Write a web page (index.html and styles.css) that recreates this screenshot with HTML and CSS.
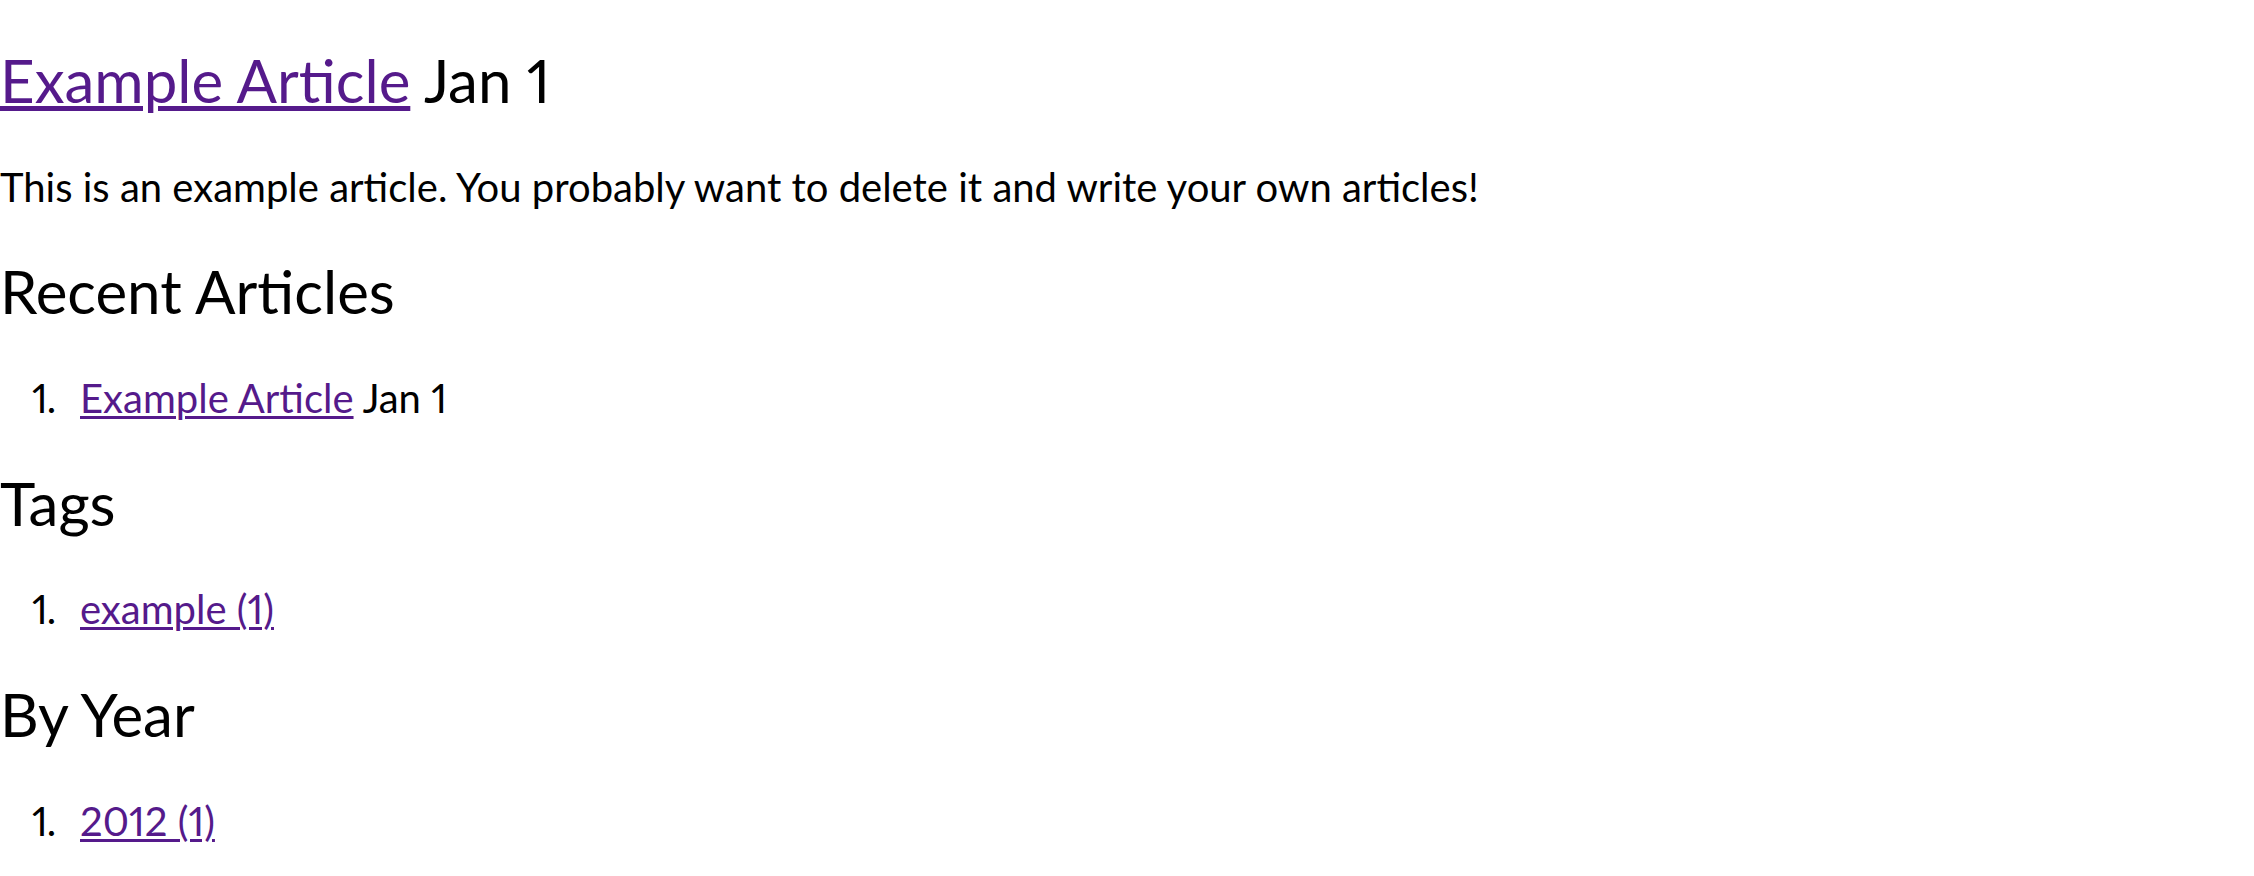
FILE: index.html
```html
<!DOCTYPE html>
<html lang="en">
<head>
<meta charset="utf-8">
<title>Example Article</title>
<link rel="stylesheet" href="styles.css">
</head>
<body>
<div class="page">
  <article class="article">
    <h1 class="title"><a class="link" href="#">Example Article</a> Jan 1</h1>
    <p class="text">This is an example article. You probably want to delete it and write your own articles!</p>
  </article>
  <section class="block">
    <h2 class="heading">Recent Articles</h2>
    <ol class="list">
      <li class="item"><a class="link" href="#">Example Article</a> Jan 1</li>
    </ol>
  </section>
  <section class="block">
    <h2 class="heading">Tags</h2>
    <ol class="list">
      <li class="item"><a class="link" href="#">example (1)</a></li>
    </ol>
  </section>
  <section class="block">
    <h2 class="heading">By Year</h2>
    <ol class="list">
      <li class="item"><a class="link" href="#">2012 (1)</a></li>
    </ol>
  </section>
</div>
</body>
</html>
```

FILE: styles.css
```css
html, body {
  margin: 0;
  padding: 0;
  background: #ffffff;
}

body {
  font-family: "Lato", "Open Sans", sans-serif;
  font-size: 40px;
  color: #000000;
  font-variant-numeric: proportional-nums;
}

.page {
  padding-top: 44px;
}

.title,
.heading {
  font-size: 60px;
  font-weight: 400;
  line-height: 72px;
  margin: 0 0 40.5px;
}

.title {
  margin-bottom: 41px;
}

.text {
  line-height: 60px;
  margin: 0 0 38px;
}

.list {
  list-style: none;
  margin: 0 0 39px;
  padding: 0;
  line-height: 60px;
}

.item {
  padding-left: 80px;
}

.item::before {
  content: counter(list-item) ".";
  display: inline-block;
  width: 48px;
  margin-left: -48px;
  letter-spacing: -1px;
}

.link {
  color: #551a8b;
  text-decoration: underline;
  text-decoration-thickness: 0.075em;
  text-underline-offset: 3px;
}
```
